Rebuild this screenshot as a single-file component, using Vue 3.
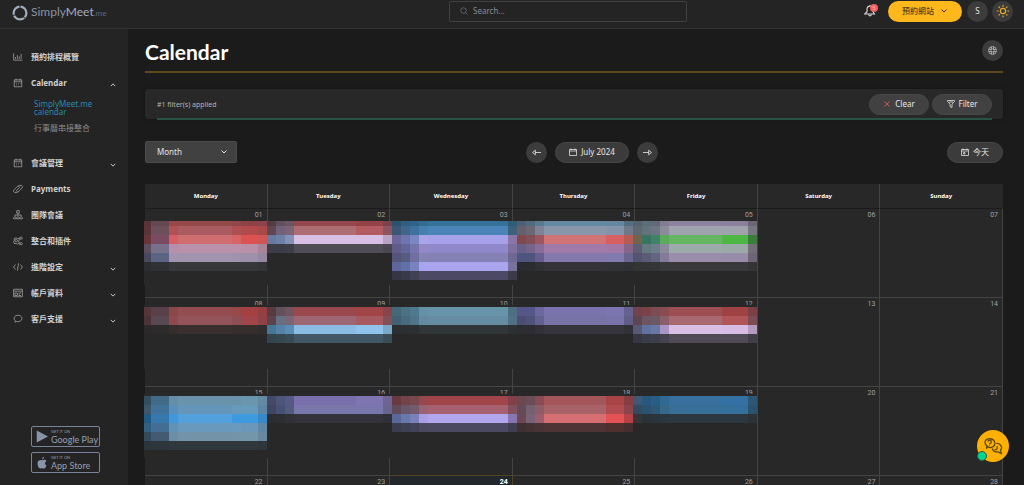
<script setup>
import { ref } from 'vue'

const view = ref('Month')
const query = ref('')

const menu = [
  { label: '預約排程概覽', icon: 'chart' },
  { label: 'Calendar', icon: 'calendar', open: true },
  { label: '會議管理', icon: 'calendar', arrow: true },
  { label: 'Payments', icon: 'pay' },
  { label: '團隊會議', icon: 'team' },
  { label: '整合和插件', icon: 'gears' },
  { label: '進階設定', icon: 'code', arrow: true },
  { label: '帳戶資料', icon: 'card', arrow: true },
  { label: '客戶支援', icon: 'chat', arrow: true }
]

const icons = {
  chart: 'M1 2v11h14M4 11V8M7 11V5M10 11V7M13 11V3',
  calendar: 'M2 3h12v11H2zM2 6h12M5 1v3M11 1v3M5 9h1M8 9h1M11 9h1M5 11h1M8 11h1',
  pay: 'M9 4l2-2q3-1 4 2 0 2-1 3l-6 6q-2 1-3-1M7 12l-2 2q-3 0-4-2 0-2 1-3l6-6q2-1 3 1M5 11l6-6',
  team: 'M6 1h4v4H6zM8 5v4M3 10V8h10v2M1 14v-2q2-3 4 0v2zM6 14v-2q2-3 4 0v2zM11 14v-2q2-3 4 0v2z',
  gears: 'M5 3l2 1 2 0 1 2-1 2 1 3-3 2-2-1-3 0-1-3 1-2 0-3zM7 8a2 2 0 1 0-3 1 2 2 0 0 0 3-1M10 3h2l1-2 2 2-1 2-3 0zM10 12h2l1-2 2 2-1 2-3 0z',
  code: 'M4 4L1 8l3 4M12 4l3 4-3 4M9 2L7 14',
  card: 'M1 2h14v12H1zM1 5h14M3 8h4v4H3zM9 8h4M9 10h2M9 12h4',
  chat: 'M3 13l1-2C-1 7 3 2 8 2s9 5 4 9q-3 2-6 1z'
}

const days = ['Monday', 'Tuesday', 'Wednesday', 'Thursday', 'Friday', 'Saturday', 'Sunday']
const weeks = [1, 8, 15, 22].map(s => Array.from({ length: 7 }, (_, i) => String(s + i).padStart(2, '0')))

// Tile widths per weekday, Monday to Friday
const tiles = [
  [7, 18, 9, 54, 9, 17, 9],
  [9, 9, 9, 62, 27, 9],
  [9, 9, 9, 9, 80, 9],
  [9, 9, 9, 62, 18, 9],
  [9, 9, 9, 9, 53, 26, 9]
]

// Per week and weekday: one line of tile colours for each band
const events = [
  [
    ['5a3338 654850 984848 954a4a 90464a 8f4246 8c444a', '5c3338 6d4f5c b05156 aa5b5f ae4f51 b14a4c a84848', '6b3439 7b4b62 d65f67 d06d70 d76467 dc5252 d05656', '5f4c5c 77718c b58fac ba91ab ba91ab b890a8 a98499', '47495b 5b6482 a494b2 a095ad 9e92ad 9c90ab 9688a1', '2d2d30 303134 37383a 37383a 37383a 37383a 343537'],
    ['533c42 605060 6a5663 94484d 934247 7c424b', '60464e 71617a 7c6476 ad6d73 b45b61 8c545e', '687a9f 6f80a8 8490b4 d8bfe4 d8c0e4 b9a4c4', '3d3d47 3a3c48 3e3e49 514d57 514d57 4a4750', '292929 292929 292929 292929 292929 292929'],
    ['2c536e 315d80 2f6287 336b91 357299 315c78', '3b5774 40658b 3d719e 4680b1 4a84b8 3d607d', '6c679a 6c75af 7788c3 a8a6e8 a5a2ea 8a75a9', '605b89 62669a 7773ac 9588c8 9089c9 7d709e', '56547b 565b80 716fa1 8582b5 8681b4 6d6993', '5e659b 6070a9 7a82bd aaa4ef a9a4ed 78709d', '353544 38394b 414055 4d4964 4c4964 3c3a4b'],
    ['4b6173 516a7e 597b8f 6589a0 6588a0 536e81', '665f6d 6b6876 7e8496 8a96ac 8494aa 70788a', '81494e 824e58 9a5661 d17478 d85f61 b65c55', '686086 77648a 886d9a a17aa8 a378a6 86658a', '4e557e 4d557c 655e8f 8379ad 817bb0 6b668f', '2a2b30 2b2c31 303137 333338 323338 303136'],
    ['56636c 5b6f7a 626a78 837b93 8d839f 8b819c 6d6674', '5e6871 64727b 6b7583 8a8d99 a0a2ad a0a2ad 777680', '72634c 377461 3f8267 5bab5d 65b662 4eb744 3b7d3b', '5d5d73 657981 6b7e8c 8b8a9c 9dacab 9ba8a8 716e76', '53546f 595b77 61657f 847b98 9a8dab 988cab 6e6575', '333436 333436 343537 38393b 39393b 39393b 343435']
  ],
  [
    ['57363a 5a4149 8b484b 934d50 984849 a24142 963f42', '4d3236 584852 91494d 92535a 8b4f55 a04549 914146', '2b2929 2c2a2a 352e2d 382f2e 352e2d 362e2d 302d2d'],
    ['583b40 62505a 705460 99494e a24549 86454a', '5a434a 657082 7c6574 9d6873 a75a60 824f57', '467794 5682aa 5b8eb6 8cbce4 91c4ec 7ca8c8', '34444e 374750 394b56 435867 435867 3c4d58'],
    ['456878 4b7182 4d7a8f 6590a6 6695aa 4c7080', '416071 49697e 50758a 6589a0 668ca4 507185', '2b2e30 2b2f31 2d3032 303538 303538 2d3032'],
    ['575486 55568a 6d67a0 7b73ae 7c75b0 66628f', '4d4c75 4f5279 63618f 7773a7 7873a9 615c88', '2c2c31 2c2c32 303036 34343a 34343a 303036'],
    ['70434e 7b4249 7c4c54 8b4b52 9c4e52 a04144 7a4046', '5d4552 6c5664 6b5966 8a5f69 a86a70 b05659 7b4c53', '5a5975 6072a0 6879a5 ab95c5 d9bfe5 d7bde5 b49bbf', '373641 3a3c49 3d3e4b 46424f 504b57 504b57 413e47']
  ],
  [
    ['324e60 416b87 658fa6 6993aa 6991a9 6995ad 638aa2', '3c566a 41739a 598fb8 6596ba 6899b9 6699ba 5c86a4', '205a83 3779ae 4097da 52a1dc 3d9adf 3e9adf 368ac9', '326080 446d94 6292b6 6999bc 6a9bbe 6b98b9 6187a6', '334b5b 425a72 6c8ea6 7293a8 7495a8 7396ab 6888a0', '2c353b 2d363c 2e383e 30383d 30383d 30383d 2e363b'],
    ['464868 4d5679 555a84 786fac 7f75b1 6d6494', '424560 475174 555a80 7976aa 7976ae 69658f', '2c2c31 2d2e34 303138 34323a 34323a 303038'],
    ['6a393f 744349 784851 98484d a1454a 82404a', '614b5a 69566a 725c6c 986474 a7606f 80515d', '5b6699 6679aa 7882b8 aa9fe6 b2a7ed 8876b1', '3b3c4c 3d4052 414258 4a4861 4b4861 403f50'],
    ['6c484f 6b4d57 8a4c54 a3565a a84346 843e42', '664b56 75606f 8f5b66 a86368 b04c4f 8b444a', '6c4855 786278 9c5e6d d66f74 e45256 b64146', '3f3033 433337 4a3336 4f3436 50302f 442e30'],
    ['425675 26587d 295d83 306991 37709f 3371a4 2c5775', '354a61 2b526f 2d5977 356889 386f99 35709c 2b536e', '373438 2b3339 2b343a 2c363e 2d3740 2d3740 2b3338']
  ]
]

const mosaics = events.map((week, w) => week.map((bands, d) => ({
  span: tiles[d].reduce((a, b) => a + b, 0),
  bands: bands.map((line, b) => ({
    thin: w === 0 && b === 0,
    cells: line.split(' ').map((c, i) => ({ flexGrow: tiles[d][i], backgroundColor: '#' + c }))
  }))
})))
</script>

<template>
  <div class="app">
    <header class="topbar">
      <a class="brand" href="#" aria-label="SimplyMeet.me">
        <svg class="ring" viewBox="0 0 16 16"><circle cx="8" cy="8" r="6.4" /><path d="M8 0v4M0.500 10.500l4-1M13 13l-3-2" /></svg>
        <span class="brand-name">Simply<b>Meet</b><small>.me</small></span>
      </a>
      <div class="top-main">
        <label class="search">
          <svg viewBox="0 0 16 16"><circle cx="7" cy="7" r="5.500" /><path d="M11 11l4 4" /></svg>
          <input v-model="query" type="text" placeholder="Search..." aria-label="Search">
        </label>
        <div class="top-actions">
          <button class="bell" type="button" aria-label="Notifications">
            <svg viewBox="0 0 16 16"><path d="M1 12h13l-2-3V6c0-6-8-6-8 0v3zM6 13q2 3 4 0M8 0v2" /></svg>
            <span class="badge">5</span>
          </button>
          <button class="site" type="button">預約網站
            <svg viewBox="0 0 16 16"><path d="M3 5l5 5 5-5" /></svg>
          </button>
          <button class="circle" type="button">S</button>
          <button class="circle sun" type="button" aria-label="Theme">
            <svg viewBox="0 0 16 16"><circle cx="8" cy="8" r="3" /><path d="M8 1v2M8 13v2M1 8h2M13 8h2M3 3l1.500 1.500M11.500 11.500L13 13M13 3l-1.500 1.500M3 13l1.500-1.500" /></svg>
          </button>
        </div>
      </div>
    </header>

    <div class="body">
      <aside class="sidebar">
        <nav>
          <template v-for="item in menu" :key="item.label">
            <a class="item" href="#">
              <svg class="icon" viewBox="0 0 16 16"><path :d="icons[item.icon]" /></svg>
              <span>{{ item.label }}</span>
              <svg v-if="item.open || item.arrow" class="arrow" viewBox="0 0 16 16"><path :d="item.open ? 'M2 11l6-6 6 6' : 'M2 5l6 6 6-6'" /></svg>
            </a>
            <div v-if="item.open" class="sub">
              <a class="active" href="#">SimplyMeet.me calendar</a>
              <a href="#">行事曆串接整合</a>
            </div>
          </template>
        </nav>
        <div class="stores">
          <a class="store" href="#">
            <svg viewBox="0 0 16 16"><path d="M1 0l15 8-15 8z" /></svg>
            <span><small>GET IT ON</small>Google Play</span>
          </a>
          <a class="store" href="#">
            <svg viewBox="0 0 16 16"><path d="M11 0q0 3-3 4 0-3 3-4M8 5q5-2 6 1-4 3 0 6-2 5-4 4t-4 0Q2 15 2 9c0-4 4-5 6-4" /></svg>
            <span><small>GET IT ON</small>App Store</span>
          </a>
        </div>
      </aside>

      <main class="main">
        <div class="title">
          <h1>Calendar</h1>
          <button class="circle help" type="button" aria-label="Help">
            <svg viewBox="0 0 16 16"><circle cx="8" cy="8" r="7" /><circle cx="8" cy="8" r="3" /><path d="M6 1v5M10 1v5M6 10v5M10 10v5M1 6h5M1 10h5M10 6h5M10 10h5" /></svg>
          </button>
        </div>

        <section class="filters">
          <span>#1 filter(s) applied</span>
          <div class="filter-actions">
            <button class="pill" type="button"><svg class="red" viewBox="0 0 16 16"><path d="M3 3l10 10M13 3L3 13" /></svg>Clear</button>
            <button class="pill" type="button"><svg viewBox="0 0 16 16"><path d="M1 1h14v2L10 8v7l-4-2V8L1 3zM4 4h8" /></svg>Filter</button>
          </div>
        </section>

        <div class="controls">
          <div class="select">
            <select v-model="view" aria-label="View">
              <option>Month</option>
              <option>Week</option>
              <option>Day</option>
            </select>
            <svg viewBox="0 0 16 16"><path d="M3 5l5 5 5-5" /></svg>
          </div>
          <div class="period">
            <button class="circle" type="button" aria-label="Previous"><svg viewBox="0 0 16 16"><path d="M16 8H6M6 4L1 8l5 4z" /></svg></button>
            <button class="pill" type="button"><svg viewBox="0 0 16 16"><path d="M1 3h14v12H1zM1 6h14M4 1v3M12 1v3" /></svg>July 2024</button>
            <button class="circle" type="button" aria-label="Next"><svg viewBox="0 0 16 16"><path d="M0 8h10M10 4l5 4-5 4z" /></svg></button>
          </div>
          <button class="pill" type="button"><svg viewBox="0 0 16 16"><path d="M1 3h14v12H1zM1 6h14M4 1v3M12 1v3M5 9h3v3H5z" /></svg>今天</button>
        </div>

        <table class="month">
          <thead>
            <tr><th v-for="d in days" :key="d" scope="col">{{ d }}</th></tr>
          </thead>
          <tbody>
            <tr v-for="(week, w) in weeks" :key="w">
              <td v-for="(n, i) in week" :key="n" :class="{ today: n === '24' }">
                <time>{{ n }}</time>
                <div v-if="i === 0 && mosaics[w]" class="layer" :class="{ low: w === 0 }">
                  <div v-for="(day, d) in mosaics[w]" :key="d" class="mosaic" :style="{ flexGrow: day.span }">
                    <div v-for="(band, b) in day.bands" :key="b" class="band" :class="{ thin: band.thin }">
                      <i v-for="(cell, c) in band.cells" :key="c" :style="cell"></i>
                    </div>
                  </div>
                </div>
              </td>
            </tr>
          </tbody>
        </table>
      </main>
    </div>

    <button class="support" type="button" aria-label="Support chat">
      <svg viewBox="0 0 24 24"><path d="M4 15l1-3C0 8 3 3 8 3s9 6 4 10q-3 2-6 0zM16 9c5-1 8 5 5 8l1 4-4-2q-5 1-7-4M6 7q0-2 2-2t2 2-2 2v1M8 11v1M17 12v3q-1 2-3 1" /></svg>
      <span class="online"></span>
    </button>
  </div>
</template>

<style>
body {
  margin: 0;
  background: #1b1b1b;
}
</style>

<style scoped>
* {
  box-sizing: border-box;
}
.app {
  height: 100vh;
  overflow: hidden;
  display: flex;
  flex-direction: column;
  background: #1b1b1b;
  color: #e4e4e4;
  font-family: "Noto Sans", "Noto Sans CJK TC", sans-serif;
  font-size: 8px;
  line-height: 12px;
}
button, input, select {
  font: inherit;
  color: inherit;
  border: 0;
  padding: 0;
  background: none;
}
a {
  color: inherit;
  text-decoration: none;
}
svg {
  display: block;
  flex: none;
  width: 8px;
  height: 8px;
  fill: none;
  stroke: currentColor;
  stroke-width: 1.500;
}
.topbar {
  display: flex;
  height: 29px;
  flex: none;
  background: #242424;
  border-bottom: 1px solid #303030;
}
.brand {
  width: 123px;
  height: 25px;
  padding-left: 12px;
  display: flex;
  align-items: center;
  gap: 3px;
  color: #a1acbf;
}
.ring {
  width: 16px;
  height: 16px;
  stroke-width: 2.200;
}
.ring path {
  stroke: #242424;
  stroke-width: 1;
}
.brand-name {
  font-family: Lato, sans-serif;
  font-size: 12px;
  font-weight: 400;
  color: #8b93a3;
}
.brand-name b {
  font-weight: 400;
  color: #a3adc0;
}
.brand-name small {
  font-size: 8px;
  color: #626874;
}
.top-main {
  flex: 1;
  height: 22px;
  padding-right: 11px;
  display: grid;
  grid-template-columns: 1fr 238px 1fr;
  align-items: center;
}
.search {
  grid-column: 2;
  height: 21px;
  padding: 0 10px;
  display: flex;
  align-items: center;
  gap: 5px;
  border: 1px solid #404040;
  border-radius: 2px;
  color: #747c8a;
}
.search input {
  flex: 1;
  min-width: 0;
  outline: 0;
}
.search input::placeholder {
  color: #858b96;
}
.search svg {
  stroke-width: 1.300;
}
.top-actions {
  display: flex;
  justify-content: flex-end;
  align-items: center;
  gap: 4px;
}
.bell {
  position: relative;
  width: 14px;
  margin-right: 6px;
  color: #d8d8d8;
}
.bell svg {
  width: 12px;
  height: 12px;
}
.badge {
  position: absolute;
  top: -1px;
  right: 0;
  width: 8px;
  height: 8px;
  border-radius: 50%;
  background: #f45d5d;
  color: #fbb;
  font-size: 6px;
  line-height: 8px;
}
.site {
  height: 21px;
  padding: 0 14px;
  display: flex;
  align-items: center;
  gap: 6px;
  border-radius: 11px;
  background: #ffb81c;
  color: #55451f;
  font-weight: 500;
}
.site svg {
  color: #332b18;
  stroke-width: 2;
}
.circle {
  width: 21px;
  height: 21px;
  display: flex;
  flex: none;
  align-items: center;
  justify-content: center;
  border-radius: 50%;
  background: #3c3c3c;
}
.site + .circle {
  margin-left: 1px;
}
.circle svg {
  width: 9px;
  height: 9px;
}
.circle.sun {
  color: #ebac28;
}
.sun svg {
  width: 14px;
  height: 14px;
  stroke-width: 1.300;
}
.help svg {
  stroke-width: 1;
}
.body {
  flex: 1;
  min-height: 0;
  display: flex;
}
.sidebar {
  width: 128px;
  flex: none;
  padding-top: 15px;
  display: flex;
  flex-direction: column;
  justify-content: space-between;
  background: #242424;
}
.item {
  height: 26px;
  padding: 0 12px 0 13px;
  display: flex;
  align-items: center;
  gap: 8px;
  font-weight: 700;
  color: #d2d2d2;
}
.icon {
  width: 10px;
  height: 10px;
  color: #a8a8a8;
  stroke-width: 1.200;
}
.arrow {
  width: 6px;
  height: 6px;
  margin: 4px 0 0 auto;
  stroke-width: 2.500;
}
.sub {
  padding: 4px 30px 16px 34px;
}
.sub a {
  display: block;
  margin-bottom: 8px;
  line-height: 8px;
  color: #8a8a8a;
  white-space: nowrap;
}
.sub .active {
  color: #2a87b0;
  white-space: normal;
}
.sub a:last-child {
  margin-bottom: 2px;
}
.stores {
  padding: 0 28px 12px 31px;
  display: grid;
  gap: 5px;
}
.store {
  height: 21px;
  padding-left: 4px;
  display: flex;
  align-items: center;
  gap: 3px;
  border: 1px solid #77849a;
  border-radius: 2px;
  color: #94a0b4;
  font-family: Lato, sans-serif;
  font-size: 9px;
  line-height: 9px;
  white-space: nowrap;
}
.store svg {
  width: 12px;
  height: 13px;
  fill: #8794a9;
  stroke: none;
}
.store small {
  display: block;
  font-size: 4px;
  line-height: 6px;
}
.main {
  flex: 1;
  min-width: 0;
  padding: 0 21px 0 17px;
}
.title {
  height: 44px;
  display: flex;
  align-items: center;
  justify-content: space-between;
  border-bottom: 2px solid #5f4a20;
}
h1 {
  margin: 4px 0 0;
  font-family: Lato, sans-serif;
  font-size: 21px;
  line-height: 24px;
  font-weight: 700;
  color: #fff;
}
.filters {
  position: relative;
  height: 30px;
  margin-top: 16px;
  padding: 0 11px 0 12px;
  display: flex;
  align-items: center;
  justify-content: space-between;
  border-radius: 3px;
  background: #282828;
  box-shadow: 0 0 4px #151515;
  color: #b4b4b4;
  font-size: 7px;
}
.filters > span {
  padding-top: 2px;
}
.filters::after {
  content: "";
  position: absolute;
  right: 11px;
  bottom: -1px;
  left: 12px;
  height: 2px;
  background: #265344;
}
.filter-actions {
  display: flex;
  gap: 3px;
}
.pill {
  height: 21px;
  padding: 0 13px;
  display: flex;
  align-items: center;
  gap: 4px;
  border: 1px solid #474747;
  border-radius: 11px;
  background: #3b3b3b;
  color: #e8e8e8;
  font-size: 8px;
}
.filter-actions .pill {
  min-width: 60px;
  justify-content: center;
  background: #414141;
}
.red {
  color: #ff5c5c;
}
.controls {
  margin-top: 22px;
  display: flex;
  justify-content: space-between;
  align-items: center;
}
.select {
  position: relative;
  width: 92px;
}
.select select {
  display: block;
  width: 100%;
  height: 22px;
  padding: 0 11px;
  appearance: none;
  border: 1px solid #4b4b4b;
  border-radius: 2px;
  background: #414141;
}
.select svg {
  position: absolute;
  top: 7px;
  right: 9px;
  stroke-width: 2;
}
.period {
  display: flex;
  gap: 8px;
}
.month {
  width: 100%;
  margin-top: 21px;
  table-layout: fixed;
  border-spacing: 0;
  background: #282828;
}
th {
  height: 24px;
  padding: 0;
  font-size: 6px;
  font-weight: 700;
  color: #fff;
  border-right: 1px solid #444;
}
th:last-child {
  border-right-color: #282828;
}
td {
  position: relative;
  height: 89px;
  padding: 0 4px;
  vertical-align: top;
  text-align: right;
  border-top: 1px solid #444;
  border-right: 1px solid #444;
}
tr:first-child td {
  border-top-color: #1b1b1b;
}
time {
  display: block;
  font-family: Roboto, sans-serif;
  font-size: 7px;
  line-height: 12px;
  color: #a0a0a0;
}
.today {
  background: #22272b;
  border-color: #514326;
}
.today time {
  color: #fff;
  font-weight: 700;
}
.layer {
  position: absolute;
  z-index: 1;
  top: 7px;
  left: -1px;
  width: 504%;
  height: 64px;
  padding-top: 2px;
  display: flex;
  align-items: flex-start;
  background: #282828;
}
.layer.low {
  top: 12px;
  padding-top: 0;
}
.mosaic {
  flex-basis: 0;
}
.band {
  height: 9px;
  display: flex;
}
.band.thin {
  height: 5px;
}
.band i {
  flex-basis: 0;
}
.support {
  position: fixed;
  right: 15px;
  bottom: 23px;
  z-index: 2;
  width: 32px;
  height: 32px;
  display: grid;
  place-items: center;
  border-radius: 50%;
  background: #ffb000;
  color: #594711;
}
.support svg {
  width: 20px;
  height: 20px;
}
.online {
  position: absolute;
  bottom: 1px;
  left: 0;
  width: 10px;
  height: 10px;
  border: 1px solid #31584b;
  border-radius: 50%;
  background: #00d68f;
}
</style>
